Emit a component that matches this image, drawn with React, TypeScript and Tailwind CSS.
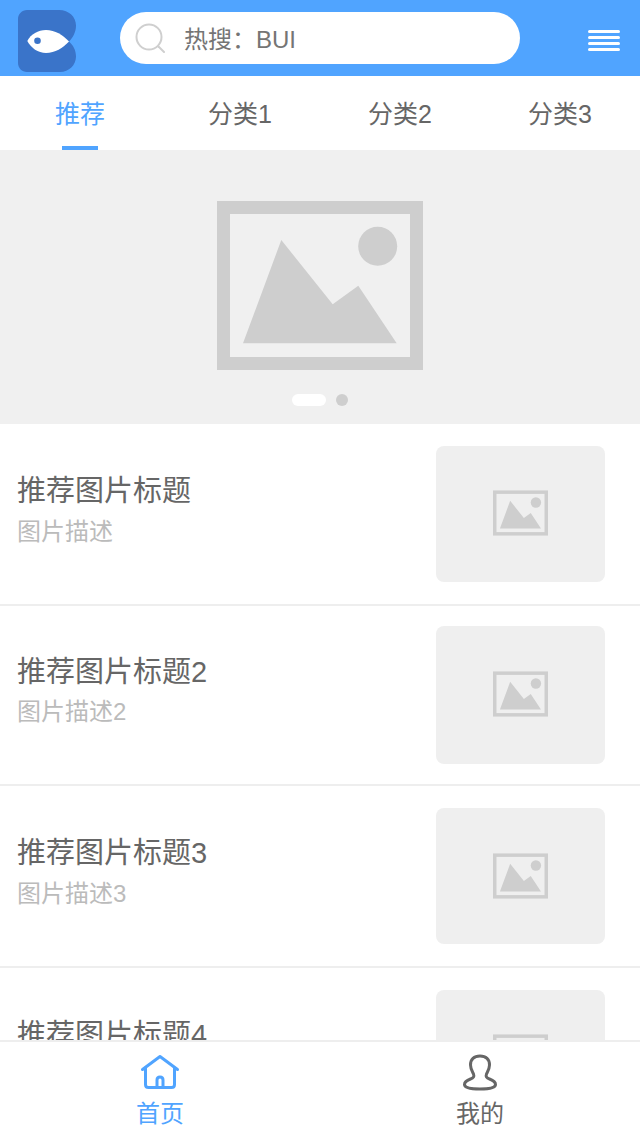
const BLUE = "#50a4ff";

const Logo = () => (
  <svg width="58" height="62" viewBox="0 0 58 62" className="shrink-0">
    <path
      d="M9 0H41C51 0 58 7 58 15.500C58 22 55 27.500 51 31.500C55 35 58 40 58 46.500C58 55 51 62 42 62H9C4 62 0 58 0 53V9C0 4 4 0 9 0Z"
      fill="#3a74c9"
    />
    <path d="M9.300 31C13 24 20 20 28 20C37 20 45 25 51 31.500C45 38 37 43 28 43C20 43 13 38 9.300 31Z" fill="#fff" />
    <circle cx="19.500" cy="30.800" r="3.300" fill="#3a74c9" />
  </svg>
);

const SearchIcon = () => (
  <svg width="30" height="30" viewBox="0 0 30 30" fill="none" stroke="#cfcfcf" strokeWidth="2" className="shrink-0">
    <circle cx="14" cy="14" r="12.500" />
    <path d="M23.500 23.500L29 29" strokeLinecap="round" />
  </svg>
);

const MenuIcon = () => (
  <div className="flex w-8 flex-col gap-[3px]">
    <div className="h-[3px] rounded-full bg-white" />
    <div className="h-[3px] rounded-full bg-white" />
    <div className="h-[3px] rounded-full bg-white" />
    <div className="h-[3px] rounded-full bg-white" />
  </div>
);

const ImageIcon = ({ className }: { className: string }) => (
  <svg viewBox="0 0 206 169" className={className}>
    <rect x="6.500" y="6.500" width="193" height="156" fill="none" stroke="#cecece" strokeWidth="13" />
    <path d="M26 142.300L64.300 39L115.700 103.300L141.300 84.700L179.700 142.300Z" fill="#cecece" />
    <circle cx="160.700" cy="45.300" r="19.500" fill="#cecece" />
  </svg>
);

const HomeIcon = () => (
  <svg width="40" height="36" viewBox="0 0 40 36" fill="none" stroke={BLUE} strokeWidth="3" strokeLinejoin="round" strokeLinecap="round">
    <path d="M2.500 15.500L20 2.500L37.500 15.500" />
    <path d="M5.500 14V30.500C5.500 32.500 6.500 33.500 8.500 33.500H31.500C33.500 33.500 34.500 32.500 34.500 30.500V14" />
    <path d="M17 33V26C17 24 18 23 20 23C22 23 23 24 23 26V33" />
  </svg>
);

const UserIcon = () => (
  <svg width="36" height="38" viewBox="0 0 36 38" fill="none" stroke="#666" strokeWidth="3" strokeLinejoin="round">
    <path d="M18 3C12 3 8.500 6.500 8.500 12C8.500 16 10.500 19 11.500 21C12.500 23.500 11.500 25 8.500 26C4.500 27.500 2.500 29 2.500 31.500C2.500 34.500 8 36 18 36C28 36 33.500 34.500 33.500 31.500C33.500 29 31.500 27.500 27.500 26C24.500 25 23.500 23.500 24.500 21C25.500 19 27.500 16 27.500 12C27.500 6.500 24 3 18 3Z" />
  </svg>
);

const tabs = ["推荐", "分类1", "分类2", "分类3"];

const rows = [
  { title: "推荐图片标题", desc: "图片描述", rowClass: "h-[182px] pt-[22px]", imgClass: "h-[136px] pb-0.5", textClass: "pt-[28px]", gapClass: "gap-[10px]" },
  { title: "推荐图片标题2", desc: "图片描述2", rowClass: "h-[180px] pt-[20px]", imgClass: "h-[138px] pb-0.5", textClass: "pt-[29px]", gapClass: "gap-[9px]" },
  { title: "推荐图片标题3", desc: "图片描述3", rowClass: "h-[182px] pt-[22px]", imgClass: "h-[136px]", textClass: "pt-[28px]", gapClass: "gap-[10px]" },
  { title: "推荐图片标题4", desc: "图片描述4", rowClass: "h-[182px] pt-[22px]", imgClass: "h-[136px] pb-0.5", textClass: "pt-[28px]", gapClass: "gap-[10px]" },
];

const App = () => {
  return (
    <div className="flex h-[1136px] w-[640px] flex-col overflow-hidden bg-white font-['Liberation_Sans','Noto_Sans_CJK_SC',sans-serif]">
      <header className="flex h-[76px] shrink-0 items-start bg-[#50a4ff] pl-[18px]">
        <div className="mt-[10px]">
          <Logo />
        </div>
        <div className="ml-[44px] mt-3 flex h-[52px] w-[400px] items-center rounded-full bg-white pl-[15px]">
          <SearchIcon />
          <span className="ml-[19px] mt-1 text-[24px] text-[#757575]">{"热搜\uFF1ABUI"}</span>
        </div>
        <div className="ml-[68px] mt-[30px]">
          <MenuIcon />
        </div>
      </header>

      <nav className="flex h-[74px] shrink-0 bg-white">
        {tabs.map((tab, i) => (
          <div key={tab} className="relative flex flex-1 items-start justify-center pt-[20px]">
            <span className={`text-[25px] leading-[36px] ${i === 0 ? "text-[#50a4ff]" : "text-[#666]"}`}>{tab}</span>
            {i === 0 && <div className="absolute bottom-0 left-[62px] h-1 w-9 bg-[#50a4ff]" />}
          </div>
        ))}
      </nav>

      <section className="flex h-[274px] shrink-0 flex-col items-center bg-[#f0f0f0] pt-[51px]">
        <ImageIcon className="h-[169px] w-[206px]" />
        <div className="mt-6 flex items-center gap-[10px]">
          <div className="h-3 w-[34px] rounded-full bg-white" />
          <div className="h-3 w-3 rounded-full bg-[#cecece]" />
        </div>
      </section>

      <main className="min-h-0 flex-1 overflow-hidden">
        {rows.map((row) => (
          <div key={row.title} className={`flex justify-between border-b-2 border-[#eee] pl-[17px] pr-[35px] ${row.rowClass}`}>
            <div className={`flex flex-col ${row.textClass} ${row.gapClass}`}>
              <div className="text-[29px] leading-[34px] text-[#666]">{row.title}</div>
              <div className="text-[24px] leading-[28px] text-[#bbb]">{row.desc}</div>
            </div>
            <div className={`flex w-[169px] shrink-0 items-center justify-center rounded-lg bg-[#efefef] ${row.imgClass}`}>
              <ImageIcon className="h-[46px] w-[55px]" />
            </div>
          </div>
        ))}
      </main>

      <footer className="flex h-[96px] shrink-0 border-t-2 border-[#eee] bg-white">
        <div className="flex flex-1 flex-col items-center pt-3">
          <HomeIcon />
          <span className="mt-[7px] text-[24px] leading-[34px] text-[#50a4ff]">首页</span>
        </div>
        <div className="flex flex-1 flex-col items-center pt-[11px]">
          <UserIcon />
          <span className="mt-1.5 text-[24px] leading-[34px] text-[#666]">我的</span>
        </div>
      </footer>
    </div>
  );
};

export default App;
